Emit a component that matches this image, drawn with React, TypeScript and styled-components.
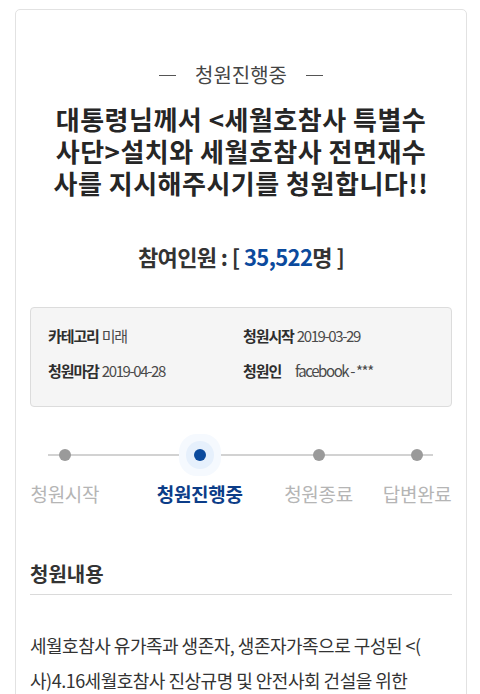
import styled, { createGlobalStyle } from "styled-components";

const GlobalStyle = createGlobalStyle`
  body {
    margin: 0;
    background: #fff;
    font-family: "Noto Sans CJK KR", "Noto Sans", sans-serif;
    color: #333;
  }
`;

const Card = styled.article`
  width: 452px;
  margin: 9px 0 0 15px;
  padding: 53px 14px 40px;
  box-sizing: border-box;
  border: 1px solid #e2e2e2;
  border-radius: 5px;
`;

const Status = styled.div`
  display: flex;
  align-items: center;
  justify-content: center;
  gap: 19px;
  font-size: 20px;
  line-height: 24px;
  color: #444;

  &::before,
  &::after {
    content: "";
    width: 17px;
    height: 1px;
    background: #555;
  }
`;

const Title = styled.h1`
  margin: 16px 0 0;
  font-size: 26px;
  line-height: 32px;
  font-weight: 700;
  letter-spacing: 0.5px;
  text-align: center;
  white-space: nowrap;
  color: #262626;
`;

const Count = styled.p`
  margin: 42px 0 0;
  font-size: 22px;
  line-height: 30px;
  font-weight: 700;
  letter-spacing: -0.6px;
  text-align: center;
  color: #333;
`;

const Number = styled.span`
  color: #0b4a9d;
`;

const InfoBox = styled.dl`
  display: grid;
  grid-template-columns: 195px 1fr;
  row-gap: 13px;
  margin: 36px 0 0;
  padding: 17px 17px 24px;
  background: #f5f5f5;
  border: 1px solid #dcdcdc;
  border-radius: 4px;
  line-height: 22px;
`;

const InfoItem = styled.div<{ $gap?: number }>`
  display: flex;
  align-items: baseline;
  gap: ${(p) => p.$gap ?? 3}px;
`;

const InfoLabel = styled.dt`
  font-size: 15px;
  font-weight: 700;
  letter-spacing: -1.1px;
  color: #2e2e2e;
`;

const InfoValue = styled.dd`
  margin: 0;
  font-size: 15px;
  letter-spacing: -1.4px;
  color: #4a4a4a;
`;

const Steps = styled.ol`
  position: relative;
  display: flex;
  margin: 42px 0 0;
  padding: 0;
  list-style: none;

  &::before {
    content: "";
    position: absolute;
    left: 18px;
    right: 19px;
    top: 5px;
    height: 2px;
    background: #d2d2d2;
  }
`;

const Step = styled.li<{ $offset: number }>`
  position: relative;
  display: flex;
  flex-direction: column;
  align-items: center;
  width: 70px;
  margin-left: ${(p) => p.$offset}px;
`;

const Dot = styled.span<{ $active?: boolean }>`
  width: 12px;
  height: 12px;
  border-radius: 50%;
  background: ${(p) => (p.$active ? "#0b4a9d" : "#9a9a9a")};
  box-shadow: ${(p) =>
    p.$active ? "0 0 0 8px #e6f0fc, 0 0 0 15px #f5f9fe" : "none"};
`;

const StepLabel = styled.span<{ $active?: boolean }>`
  margin-top: 20px;
  font-size: 19px;
  line-height: 26px;
  white-space: nowrap;
  letter-spacing: -0.3px;
  font-weight: ${(p) => (p.$active ? 700 : 400)};
  color: ${(p) => (p.$active ? "#0c3d88" : "#b5b5b5")};
`;

const SectionTitle = styled.h2`
  margin: 53px 0 0;
  padding-bottom: 6px;
  border-bottom: 1px solid #dadada;
  font-size: 20px;
  line-height: 28px;
  font-weight: 700;
  color: #333;
`;

const Body = styled.p`
  margin: 33px 0 0;
  font-size: 18px;
  line-height: 35px;
  letter-spacing: -0.5px;
  white-space: nowrap;
  color: #333;
`;

const steps = [
  { label: "청원시작", offset: 0 },
  { label: "청원진행중", offset: 65, active: true },
  { label: "청원종료", offset: 49 },
  { label: "답변완료", offset: 29 },
];

export default function App() {
  return (
    <>
      <GlobalStyle />
      <Card>
        <Status>청원진행중</Status>
        <Title>
          대통령님께서 &lt;세월호참사 특별수
          <br />
          사단&gt;설치와 세월호참사 전면재수
          <br />
          사를 지시해주시기를 청원합니다!!
        </Title>
        <Count>
          참여인원 : [ <Number>35,522</Number>명 ]
        </Count>

        <InfoBox>
          <InfoItem>
            <InfoLabel>카테고리</InfoLabel>
            <InfoValue>미래</InfoValue>
          </InfoItem>
          <InfoItem>
            <InfoLabel>청원시작</InfoLabel>
            <InfoValue>2019-03-29</InfoValue>
          </InfoItem>
          <InfoItem>
            <InfoLabel>청원마감</InfoLabel>
            <InfoValue>2019-04-28</InfoValue>
          </InfoItem>
          <InfoItem $gap={14}>
            <InfoLabel>청원인</InfoLabel>
            <InfoValue>facebook - ***</InfoValue>
          </InfoItem>
        </InfoBox>

        <Steps>
          {steps.map((s) => (
            <Step key={s.label} $offset={s.offset}>
              <Dot $active={s.active} />
              <StepLabel $active={s.active}>{s.label}</StepLabel>
            </Step>
          ))}
        </Steps>

        <SectionTitle>청원내용</SectionTitle>
        <Body>
          세월호참사 유가족과 생존자, 생존자가족으로 구성된 &lt;(
          <br />
          사)4.16세월호참사 진상규명 및 안전사회 건설을 위한
          <br />
          피해자가족협의회&gt;는
        </Body>
      </Card>
    </>
  );
}
